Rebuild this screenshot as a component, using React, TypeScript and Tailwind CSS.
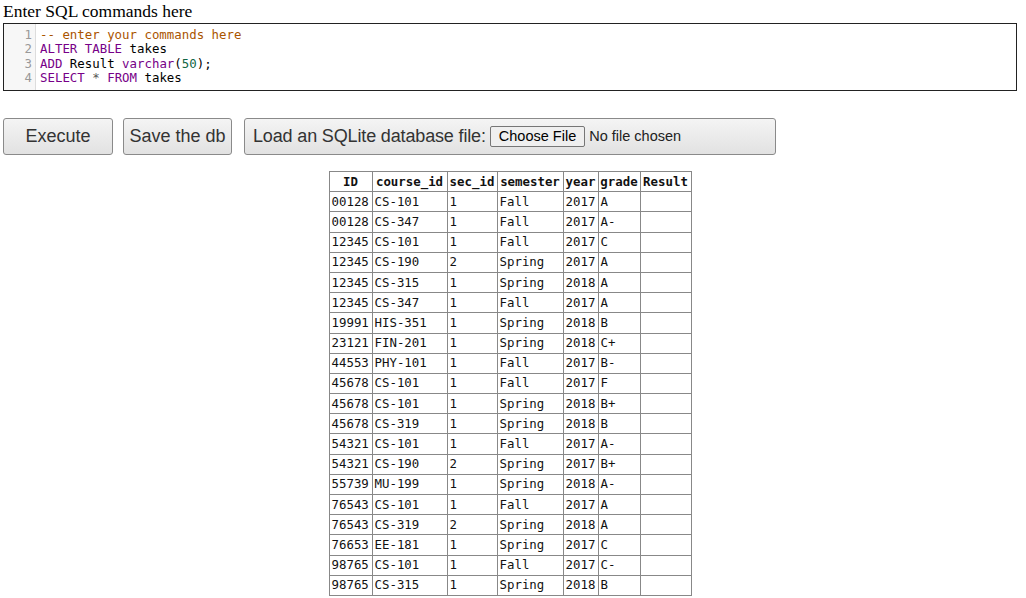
const rows: string[][] = [
  ["00128", "CS-101", "1", "Fall", "2017", "A"],
  ["00128", "CS-347", "1", "Fall", "2017", "A-"],
  ["12345", "CS-101", "1", "Fall", "2017", "C"],
  ["12345", "CS-190", "2", "Spring", "2017", "A"],
  ["12345", "CS-315", "1", "Spring", "2018", "A"],
  ["12345", "CS-347", "1", "Fall", "2017", "A"],
  ["19991", "HIS-351", "1", "Spring", "2018", "B"],
  ["23121", "FIN-201", "1", "Spring", "2018", "C+"],
  ["44553", "PHY-101", "1", "Fall", "2017", "B-"],
  ["45678", "CS-101", "1", "Fall", "2017", "F"],
  ["45678", "CS-101", "1", "Spring", "2018", "B+"],
  ["45678", "CS-319", "1", "Spring", "2018", "B"],
  ["54321", "CS-101", "1", "Fall", "2017", "A-"],
  ["54321", "CS-190", "2", "Spring", "2017", "B+"],
  ["55739", "MU-199", "1", "Spring", "2018", "A-"],
  ["76543", "CS-101", "1", "Fall", "2017", "A"],
  ["76543", "CS-319", "2", "Spring", "2018", "A"],
  ["76653", "EE-181", "1", "Spring", "2017", "C"],
  ["98765", "CS-101", "1", "Fall", "2017", "C-"],
  ["98765", "CS-315", "1", "Spring", "2018", "B"],
];

const headers = ["ID", "course_id", "sec_id", "semester", "year", "grade", "Result"];
const widths = ["w-[43px]", "w-[75px]", "w-[50px]", "w-[66px]", "w-[35px]", "w-[42px]", "w-[51px]"];

function Editor() {
  return (
    <div className="ml-[3px] mr-[9px] flex border border-[#222] bg-white font-['DejaVu_Sans_Mono',monospace] text-[12.4px] leading-[14.3px]">
      {/* gutter */}
      <div className="w-[32px] border-r border-[#ddd] bg-[#f7f7f7] pt-[4px] pb-[5px] pr-[3px] text-right text-[#999]">
        <div>1</div>
        <div>2</div>
        <div>3</div>
        <div>4</div>
      </div>
      <div className="pt-[4px] pl-[4px] text-[#000] whitespace-pre">
        <div className="text-[#a50]">-- enter your commands here</div>
        <div>
          <span className="text-[#708]">ALTER</span> <span className="text-[#708]">TABLE</span> takes
        </div>
        <div>
          <span className="text-[#708]">ADD</span> Result <span className="text-[#708]">varchar</span>(
          <span className="text-[#164]">50</span>);
        </div>
        <div>
          <span className="text-[#708]">SELECT</span> <span className="text-[#555]">*</span>{" "}
          <span className="text-[#708]">FROM</span> takes
        </div>
      </div>
    </div>
  );
}

function Btn({ children, className }: { children: React.ReactNode; className?: string }) {
  return (
    <button
      className={`h-[37px] rounded-[3px] border border-[#8a8a8a] bg-gradient-to-b from-[#f4f4f4] to-[#e2e2e2] text-[18px] text-[#333] ${className ?? ""}`}
    >
      {children}
    </button>
  );
}

export default function App() {
  return (
    <div className="min-h-[598px] bg-white">
      <div className="px-[3px] pt-[1px] font-['Liberation_Serif',serif] text-[17.5px] leading-[21px] text-black">
        Enter SQL commands here
      </div>
      <div className="mt-[1px]">
        <Editor />
      </div>

      <div className="mt-[27px] flex items-center gap-[10px] px-[3px] font-['Liberation_Sans',Arial,sans-serif]">
        <Btn className="w-[110px]">Execute</Btn>
        <Btn className="w-[109px]">Save the db</Btn>
        <div className="ml-[2px] flex h-[37px] w-[532px] items-center rounded-[3px] border border-[#8a8a8a] bg-gradient-to-b from-[#f4f4f4] to-[#e2e2e2] pl-[8px] text-[18px] text-[#333]">
          <span className="tracking-[-0.15px]">Load an SQLite database file:</span>
          <span className="ml-[4px] flex h-[21px] items-center rounded-[2px] border border-[#767676] bg-[#efefef] px-[8px] text-[14.5px] text-black">
            Choose File
          </span>
          <span className="ml-[4px] text-[14.5px] text-[#222]">No file chosen</span>
        </div>
      </div>

      <div className="mt-[16px] flex justify-center pr-[6px]">
        <table className="border-collapse font-['DejaVu_Sans_Mono',monospace] text-[12.4px] text-[#111]">
          <thead>
            <tr>
              {headers.map((h, i) => (
                <th
                  key={h}
                  className={`${widths[i]} h-[20px] border border-[#888] px-[1px] text-center font-bold leading-[18px]`}
                >
                  {h}
                </th>
              ))}
            </tr>
          </thead>
          <tbody>
            {rows.map((r, ri) => (
              <tr key={ri}>
                {[...r, ""].map((c, ci) => (
                  <td
                    key={ci}
                    className="h-[20.2px] border border-[#888] px-[2px] text-left leading-[18px] whitespace-nowrap"
                  >
                    {c}
                  </td>
                ))}
              </tr>
            ))}
          </tbody>
        </table>
      </div>
    </div>
  );
}
